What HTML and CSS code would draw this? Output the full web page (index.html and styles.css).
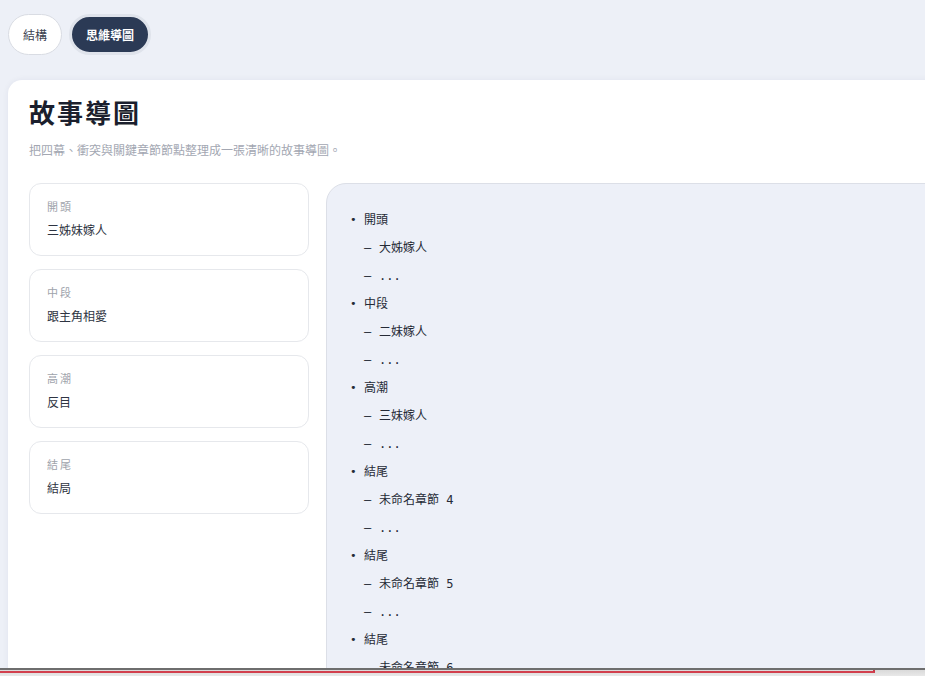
FILE: index.html
```html
<!DOCTYPE html>
<html lang="zh-Hant">
  <head>
    <meta charset="UTF-8" />
    <meta name="viewport" content="width=device-width, initial-scale=1.0" />
    <title>故事導圖</title>
    <link rel="stylesheet" href="styles.css">
  </head>
  <body>
    <div class="tabs">
      <button class="tab">結構</button>
      <button class="tab active">思維導圖</button>
    </div>

    <div class="card">
      <h1>故事導圖</h1>
      <p class="subtitle">把四幕、衝突與關鍵章節節點整理成一張清晰的故事導圖。</p>

      <div class="board">
        <div class="acts">
          <div class="act">
            <div class="act-label">開頭</div>
            <div class="act-value">三姊妹嫁人</div>
          </div>
          <div class="act">
            <div class="act-label">中段</div>
            <div class="act-value">跟主角相愛</div>
          </div>
          <div class="act">
            <div class="act-label">高潮</div>
            <div class="act-value">反目</div>
          </div>
          <div class="act">
            <div class="act-label">結尾</div>
            <div class="act-value">結局</div>
          </div>
        </div>

        <div class="mindmap">
          <ul class="tree">
            <li><span class="dot">•</span>開頭</li>
            <li class="sub"><span class="dash">–</span>大姊嫁人</li>
            <li class="sub"><span class="dash">–</span>...</li>
            <li><span class="dot">•</span>中段</li>
            <li class="sub"><span class="dash">–</span>二妹嫁人</li>
            <li class="sub"><span class="dash">–</span>...</li>
            <li><span class="dot">•</span>高潮</li>
            <li class="sub"><span class="dash">–</span>三妹嫁人</li>
            <li class="sub"><span class="dash">–</span>...</li>
            <li><span class="dot">•</span>結尾</li>
            <li class="sub"><span class="dash">–</span>未命名章節 4</li>
            <li class="sub"><span class="dash">–</span>...</li>
            <li><span class="dot">•</span>結尾</li>
            <li class="sub"><span class="dash">–</span>未命名章節 5</li>
            <li class="sub"><span class="dash">–</span>...</li>
            <li><span class="dot">•</span>結尾</li>
            <li class="sub"><span class="dash">–</span>未命名章節 6</li>
          </ul>
        </div>
      </div>
    </div>

    <div class="dock"></div>
  </body>
</html>
```

FILE: styles.css
```css
body {
  font-family: Inter, "Noto Sans CJK TC", sans-serif;
  margin: 0;
  padding: 14px 0 0 8px;
  background-color: #edf0f7;
  color: #2b3140;
  height: 676px;
  box-sizing: border-box;
  overflow: hidden;
}

.tabs {
  display: flex;
  gap: 7px;
  align-items: center;
}

.tab {
  font-family: inherit;
  height: 41px;
  padding: 0 14px;
  border: 1px solid #d9dce3;
  border-radius: 21px;
  background-color: #fff;
  color: #3a4150;
  font-size: 12px;
}

.tab.active {
  padding: 0 14px;
  border: 3px solid #dfe3eb;
  background-color: #2b3a55;
  color: #fff;
  font-weight: 700;
}

.card {
  margin-top: 25px;
  width: 1000px;
  height: 620px;
  padding: 16px 21px;
  box-sizing: border-box;
  background-color: #fff;
  border-radius: 14px;
  box-shadow: 0 0 6px rgba(30, 40, 80, 0.06);
}

h1 {
  margin: 0;
  font-size: 26px;
  line-height: 36px;
  font-weight: 700;
  color: #1b1f2d;
  letter-spacing: 2px;
}

.subtitle {
  margin: 10px 0 0 0;
  font-size: 12px;
  line-height: 18px;
  color: #a3a7b2;
}

.board {
  margin-top: 23px;
  display: flex;
  gap: 17px;
  align-items: flex-start;
}

.acts {
  width: 280px;
  display: flex;
  flex-direction: column;
  gap: 13px;
}

.act {
  height: 73px;
  box-sizing: border-box;
  padding: 15px 17px;
  border: 1px solid #e6e8ec;
  border-radius: 12px;
  background-color: #fff;
}

.act-label {
  font-size: 11px;
  line-height: 16px;
  letter-spacing: 2px;
  color: #9ea3ab;
}

.act-value {
  margin-top: 7px;
  font-size: 12px;
  line-height: 18px;
  color: #2e3442;
}

.mindmap {
  flex: 1;
  height: 600px;
  padding: 22px 0 0 22px;
  background-color: #edf0f8;
  border: 1px solid #dcdfe7;
  border-radius: 20px 0 0 0;
}

.tree {
  list-style: none;
  margin: 0;
  padding: 0;
  font-family: "DejaVu Sans Mono", "Noto Sans CJK TC", monospace;
  font-size: 12px;
  line-height: 28px;
  color: #252a36;
}

.tree li {
  display: flex;
  white-space: pre;
}

.dot {
  width: 14px;
  padding-left: 1px;
  font-size: 11px;
}

.tree .sub {
  padding-left: 15px;
}

.dash {
  width: 15px;
}

.dock {
  position: fixed;
  left: 0;
  right: 0;
  bottom: 0;
  height: 6px;
  border-top: 2px solid #6e6e6e;
  background: linear-gradient(#d9d9d9, #e8e8e8);
}

.dock::before {
  content: "";
  position: absolute;
  left: 0;
  top: 0;
  width: 873px;
  height: 1px;
  border-bottom: 2px solid #d2404e;
  border-right: 2px solid #c83a48;
}
```
